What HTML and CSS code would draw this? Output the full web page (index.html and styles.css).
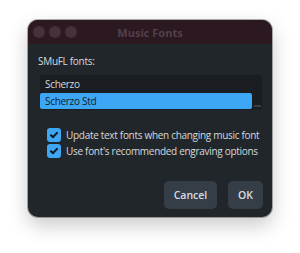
FILE: index.html
```html
<!DOCTYPE html>
<html lang="en">
<head>
    <meta charset="UTF-8">
    <meta name="viewport" content="width=device-width, initial-scale=1.0">
    <title>Music Fonts</title>
    <link rel="stylesheet" href="styles.css">
</head>
<body>
    <div class="window">
        <div class="titlebar">
            <div class="lights">
                <span class="light"></span>
                <span class="light"></span>
                <span class="light"></span>
            </div>
            <div class="title">Music Fonts</div>
        </div>

        <div class="content">
            <div class="label">SMuFL fonts:</div>

            <div class="list">
                <div class="rows">
                    <div class="row">Scherzo</div>
                    <div class="row selected">Scherzo Std</div>
                </div>
                <div class="scrollbar">
                    <span class="thumb"></span>
                </div>
            </div>

            <div class="options">
                <label class="option">
                    <span class="check">
                        <svg width="10" height="10" viewBox="0 0 10 10">
                            <path d="M2 5.2l2 2 4-4.4" fill="none" stroke="#10161c" stroke-width="2" stroke-linecap="round" stroke-linejoin="round"/>
                        </svg>
                    </span>
                    Update text fonts when changing music font
                </label>
                <label class="option">
                    <span class="check">
                        <svg width="10" height="10" viewBox="0 0 10 10">
                            <path d="M2 5.2l2 2 4-4.4" fill="none" stroke="#10161c" stroke-width="2" stroke-linecap="round" stroke-linejoin="round"/>
                        </svg>
                    </span>
                    Use font's recommended engraving options
                </label>
            </div>

            <div class="buttons">
                <button class="btn cancel">Cancel</button>
                <button class="btn ok">OK</button>
            </div>
        </div>
    </div>
</body>
</html>
```

FILE: styles.css
```css
body {
    margin: 0;
    background-color: #ffffff;
    font-family: "Open Sans", "Noto Sans", sans-serif;
    width: 300px;
    height: 253px;
    padding-top: 20px;
    box-sizing: border-box;
}

.window {
    width: 244px;
    height: 197px;
    margin-left: 28px;
    border-radius: 10px;
    overflow: hidden;
    background-color: #21262b;
    box-shadow: 0 8px 20px rgba(0, 0, 0, 0.22), 0 0 0 1px rgba(0, 0, 0, 0.3);
    display: flex;
    flex-direction: column;
}

.titlebar {
    height: 24px;
    background-color: #2b1820;
    position: relative;
    display: flex;
    align-items: center;
    justify-content: center;
}

.lights {
    position: absolute;
    left: 5px;
    top: 6px;
    display: flex;
    gap: 4px;
}

.light {
    width: 12px;
    height: 12px;
    border-radius: 50%;
    background-color: #45313c;
}

.title {
    font-size: 11px;
    font-weight: bold;
    color: #53404b;
}

.content {
    flex: 1;
    padding: 10px 9px 8px 10px;
    display: flex;
    flex-direction: column;
}

.label,
.row,
.option {
    font-size: 10px;
    font-weight: 500;
    letter-spacing: -0.3px;
    white-space: nowrap;
}

.label {
    color: #d6d9dc;
    height: 15px;
    line-height: 15px;
}

.list {
    margin-top: 6px;
    margin-left: 2px;
    margin-right: 1px;
    height: 35px;
    background-color: #1a1d21;
    border-radius: 4px;
    display: flex;
    padding-top: 1px;
    box-sizing: border-box;
}

.rows {
    flex: 1;
}

.row {
    height: 17px;
    line-height: 17px;
    color: #d6d9dc;
    padding-left: 5px;
}

.row.selected {
    background-color: #3ea7f5;
    color: #10202e;
    border-radius: 2px;
    height: 16px;
    line-height: 16px;
}

.scrollbar {
    width: 10px;
    display: flex;
    align-items: flex-end;
    justify-content: center;
    padding-bottom: 3px;
}

.thumb {
    width: 7px;
    height: 2px;
    background-color: #3a3f45;
}

.options {
    margin-top: 18px;
    margin-left: 9px;
    display: flex;
    flex-direction: column;
    gap: 2px;
}

.option {
    display: flex;
    align-items: center;
    gap: 5px;
    color: #d6d9dc;
    height: 14px;
}

.check {
    flex: none;
    width: 14px;
    height: 14px;
    border-radius: 3px;
    background-color: #3ea7f5;
    display: flex;
    align-items: center;
    justify-content: center;
}

.buttons {
    margin-top: auto;
    display: flex;
    justify-content: flex-end;
    gap: 11px;
}

.btn {
    height: 28px;
    padding: 0;
    border: none;
    border-radius: 5px;
    background-color: #353d47;
    color: #d8dde2;
    font-family: "Open Sans", "Noto Sans", sans-serif;
    font-size: 10.5px;
    font-weight: 600;
}

.cancel {
    width: 53px;
}

.ok {
    width: 35px;
}
```
